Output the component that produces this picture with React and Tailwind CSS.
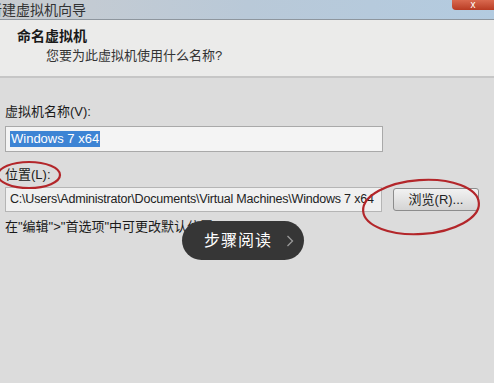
import React from 'react'

export default function App() {
    return (
        <div className="relative w-[494px] h-[383px] overflow-hidden bg-[#dcdcdc] text-[#1a1a1a]" style={{ fontFamily: '"Liberation Sans", "Noto Sans CJK SC", sans-serif' }}>
            {/* title bar */}
            <div className="h-[20px] flex items-center justify-between bg-gradient-to-r from-[#c9ccd0] via-[#b9c9d8] to-[#b3cbe0] border-b border-[#8e969e]">
                <div className="text-[14px] leading-none text-[#222] -ml-[12px] opacity-90">新建虚拟机向导</div>
                <div className="self-start w-[42px] h-[10px] rounded-bl-[4px] bg-gradient-to-b from-[#d9694f] to-[#b83a22] flex items-end justify-center text-white text-[10px] leading-none">x</div>
            </div>

            {/* header */}
            <div className="h-[58px] bg-[#ebebea] border-b-2 border-[#c6c6c6] pt-[6px] pl-[17px]">
                <div className="text-[14px] font-bold leading-[20px]">命名虚拟机</div>
                <div className="text-[13px] leading-[20px] pl-[29px] text-[#333]">您要为此虚拟机使用什么名称?</div>
            </div>

            {/* body */}
            <div className="px-[5px] pt-[24px]">
                <div className="text-[13px] leading-[20px]">虚拟机名称(V):</div>
                <div className="mt-[4px] w-[378px] h-[26px] bg-[#f4f4f4] border border-[#a9a9a9] flex items-center px-[4px]">
                    <span className="bg-[#3d84d4] text-white text-[13px] leading-[16px] px-[1px]">Windows 7 x64</span>
                </div>

                <div className="mt-[13px] text-[13px] leading-[20px]">位置(L):</div>
                <div className="mt-[2px] flex items-center gap-[11px]">
                    <div className="w-[377px] h-[25px] bg-[#f0f0f0] border border-[#b5b5b5] flex items-center px-[4px] overflow-hidden whitespace-nowrap text-[12.5px] tracking-[-0.2px] text-[#222]">
                        C:\Users\Administrator\Documents\Virtual Machines\Windows 7 x64
                    </div>
                    <div className="w-[86px] h-[23px] rounded-[3px] border border-[#8c8c8c] bg-gradient-to-b from-[#f2f2f2] to-[#d4d4d4] flex items-center justify-center text-[13px] text-[#222]">浏览(R)...</div>
                </div>
                <div className="mt-[5px] text-[13px] leading-[20px]">在"编辑">"首选项"中可更改默认位置。</div>
            </div>

            {/* red annotation circles */}
            <svg className="absolute left-0 top-0 pointer-events-none" width="494" height="383">
                <ellipse cx="29" cy="175" rx="31" ry="13" fill="none" stroke="#b3262a" strokeWidth="2.2" />
                <ellipse cx="421" cy="207" rx="58" ry="27" fill="none" stroke="#b3262a" strokeWidth="2.2" transform="rotate(-4 421 207)" />
            </svg>

            {/* step reading pill */}
            <div className="absolute left-[182px] top-[221px] w-[122px] h-[39px] rounded-full bg-[#363636] flex items-center pl-[22px] gap-[14px]">
                <span className="text-white text-[16px] tracking-[1px]">步骤阅读</span>
                <svg width="8" height="12" viewBox="0 0 8 12">
                    <path d="M1.5 1 L6.5 6 L1.5 11" fill="none" stroke="#9a9a9a" strokeWidth="1.3" />
                </svg>
            </div>
        </div>
    )
}
